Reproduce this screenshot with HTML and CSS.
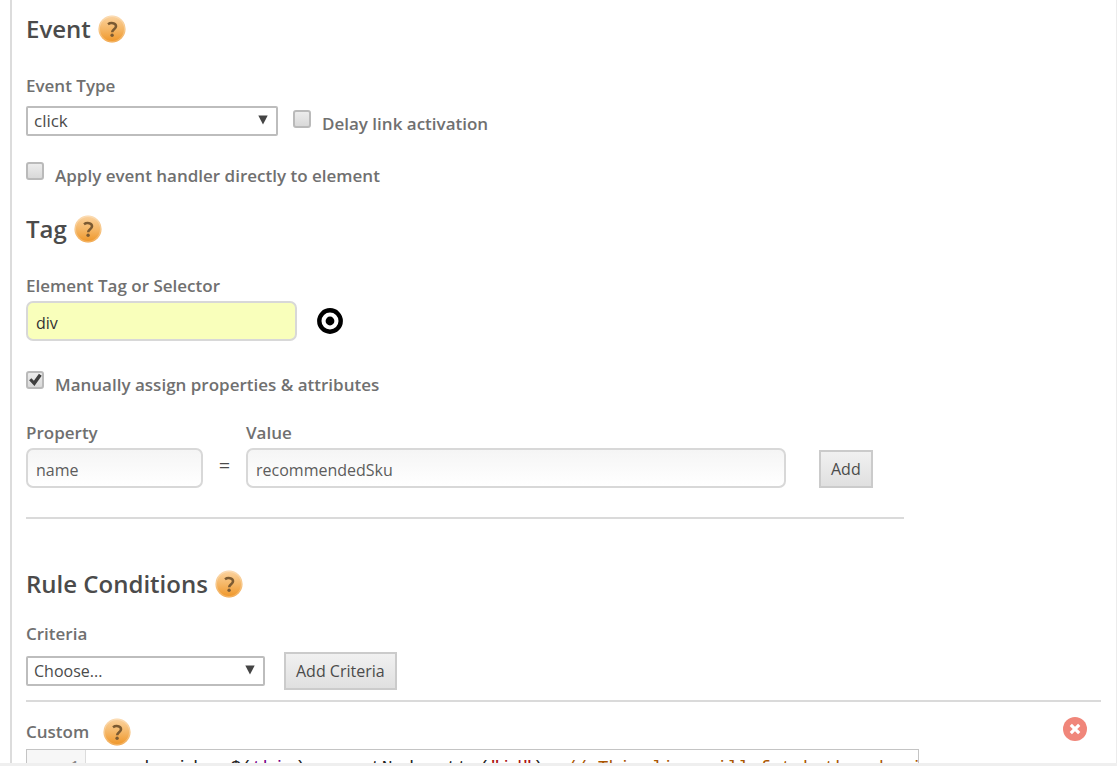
FILE: index.html
```html
<!DOCTYPE html>
<html lang="en">
<head>
<meta charset="utf-8">
<title>Event rule</title>
<link rel="stylesheet" href="styles.css">
</head>
<body>
<svg class="defs" aria-hidden="true">
  <defs>
    <linearGradient id="amber" x1="0" y1="0" x2="0" y2="1">
      <stop offset="0" stop-color="#fbd3a0"/>
      <stop offset="0.5" stop-color="#f5b767"/>
      <stop offset="1" stop-color="#ef9526"/>
    </linearGradient>
    <symbol id="help" viewBox="0 0 28 28">
      <circle cx="14" cy="14" r="13.5" fill="url(#amber)"/>
      <circle cx="14" cy="14" r="12.6" fill="none" stroke="#fff" stroke-opacity="0.25" stroke-width="1.2"/>
      <path d="M10 9.2c2.6-1.8 8-1.6 8 2 0 3-3.8 3-3.8 6" fill="none" stroke="#7b5a32" stroke-width="2.6"/>
      <circle cx="14.1" cy="20.3" r="1.7" fill="#7b5a32"/>
    </symbol>
    <symbol id="arrow" viewBox="0 0 10 10">
      <path d="M0.3 0.5h9.4L5 9.5z" fill="#444"/>
    </symbol>
  </defs>
</svg>
<main class="panel">
  <section class="section">
    <h2 class="title">Event <button class="help" type="button" aria-label="Event help"><svg><use href="#help"/></svg></button></h2>
    <label class="label" for="event-type">Event Type</label>
    <div class="row">
      <span class="select select-event">
        <select id="event-type"><option>click</option></select>
        <svg class="arrow"><use href="#arrow"/></svg>
      </span>
      <label class="check"><input type="checkbox"><span>Delay link activation</span></label>
    </div>
    <label class="check check-line"><input type="checkbox"><span>Apply event handler directly to element</span></label>
  </section>

  <section class="section section-tag">
    <h2 class="title">Tag <button class="help" type="button" aria-label="Tag help"><svg><use href="#help"/></svg></button></h2>
    <label class="label" for="selector">Element Tag or Selector</label>
    <div class="selector-row">
      <input class="text text-filled" id="selector" type="text" value="div">
      <button class="target" type="button" aria-label="Pick element">
        <svg viewBox="0 0 26 26"><circle cx="13" cy="13" r="10.7" fill="none" stroke="#000" stroke-width="4.4"/><circle cx="13" cy="13" r="4.4"/></svg>
      </button>
    </div>
    <label class="check check-manual"><input type="checkbox" checked><span>Manually assign properties &amp; attributes</span></label>
    <div class="pair">
      <div class="property">
        <label class="label" for="property">Property</label>
        <input class="text" id="property" type="text" value="name">
      </div>
      <span class="equals">=</span>
      <div class="value">
        <label class="label" for="value">Value</label>
        <input class="text" id="value" type="text" value="recommendedSku">
      </div>
      <button class="button" type="button">Add</button>
    </div>
  </section>

  <section class="section section-rules">
    <h2 class="title">Rule Conditions <button class="help" type="button" aria-label="Rule conditions help"><svg><use href="#help"/></svg></button></h2>
    <label class="label" for="criteria">Criteria</label>
    <div class="criteria-row">
      <span class="select select-criteria">
        <select id="criteria"><option>Choose...</option></select>
        <svg class="arrow"><use href="#arrow"/></svg>
      </span>
      <button class="button" type="button">Add Criteria</button>
    </div>
  </section>

  <section class="custom">
    <div class="custom-head">
      <h3 class="label">Custom</h3>
      <button class="help" type="button" aria-label="Custom help"><svg><use href="#help"/></svg></button>
      <button class="remove" type="button" aria-label="Remove">
        <svg viewBox="0 0 24 24"><circle cx="12" cy="12" r="12" fill="#f0867a"/><path d="M7.8 7.8l8.4 8.4M16.2 7.8l-8.4 8.4" stroke="#fff" stroke-width="3.2"/></svg>
      </button>
    </div>
    <div class="editor">
      <div class="gutter">1</div>
      <pre class="code">var sku_id = $(<span class="keyword">this</span>).parentNode.attr(<span class="string">"id"</span>); <span class="comment">// This line will fetch the sku id</span></pre>
    </div>
  </section>
</main>
<div class="footer"></div>
</body>
</html>
```
FILE: styles.css
```css
* {
  box-sizing: border-box;
}

body {
  margin: 0;
  height: 100vh;
  display: flex;
  flex-direction: column;
  background: #fff;
  color: #4b4b4b;
  font: 17px/24px "Open Sans", "Noto Sans", sans-serif;
}

button,
input,
select {
  font: inherit;
  color: inherit;
  margin: 0;
}

.defs {
  position: absolute;
  width: 0;
  height: 0;
}

.panel {
  flex: 1;
  min-height: 0;
  overflow: hidden;
  margin-left: 10px;
  padding: 12px 15px 0 14px;
  border-left: 2px solid #dcdcdc;
  border-right: 1px solid #ececec;
}

.footer {
  height: 3px;
  background: #efefef;
}

.title {
  display: flex;
  align-items: center;
  gap: 7px;
  margin: 0 0 28px;
  font-size: 24px;
  font-weight: 600;
  line-height: 34px;
}

.help {
  display: block;
  width: 28px;
  height: 28px;
  padding: 0;
  border: 0;
  background: none;
}

.help svg,
.target svg,
.remove svg {
  display: block;
  width: 100%;
  height: 100%;
}

.label {
  display: block;
  margin: 0;
  color: #707070;
  font-size: 17px;
  font-weight: 600;
}

.row {
  display: flex;
  align-items: flex-start;
  gap: 15px;
  margin-top: 8px;
}

.row .check {
  padding-top: 4px;
}

.select {
  position: relative;
  display: block;
}

.select select {
  display: block;
  width: 100%;
  height: 30px;
  padding: 0 6px;
  border: 2px solid #bdbdbd;
  border-radius: 2px;
  background: #fff;
  appearance: none;
}

.select-event {
  width: 252px;
}

.select-criteria {
  width: 239px;
}

.select-criteria select {
  font-size: 16px;
}

.arrow {
  position: absolute;
  top: 9px;
  right: 10px;
  width: 10px;
  height: 10px;
  pointer-events: none;
}

.check {
  display: flex;
  align-items: flex-start;
  gap: 11px;
  color: #707070;
  font-weight: 600;
}

.check span {
  padding-top: 2px;
}

.check input {
  width: 18px;
  height: 18px;
  flex: none;
  border: 2px solid #bababa;
  border-radius: 3px;
  background: linear-gradient(#ececec, #d9d9d9);
  appearance: none;
}

.check input:checked::before {
  content: "";
  display: block;
  width: 14px;
  height: 14px;
  background: #3f3f3f;
  clip-path: polygon(8% 52%, 24% 38%, 42% 55%, 78% 6%, 98% 20%, 46% 92%);
}

.check-line {
  margin-top: 26px;
}

.section-tag {
  margin-top: 24px;
}

.selector-row {
  display: flex;
  align-items: center;
  gap: 20px;
  margin-top: 3px;
}

.text {
  display: block;
  width: 100%;
  height: 40px;
  padding: 3px 8px 0;
  border: 2px solid #d8d8d8;
  border-radius: 7px;
  background: linear-gradient(#f5f5f5, #fff);
  color: #5c5c5c;
  font-size: 16px;
}

.text-filled {
  width: 271px;
  background: #f9ffbb;
  color: #333;
}

.target {
  width: 26px;
  height: 26px;
  padding: 0;
  border: 0;
  background: none;
}

.check-manual {
  margin-top: 30px;
}

.pair {
  display: flex;
  align-items: flex-end;
  max-width: 878px;
  margin-top: 24px;
  padding-bottom: 29px;
  border-bottom: 2px solid #dadada;
}

.pair .label {
  margin-bottom: 3px;
}

.property {
  width: 177px;
}

.equals {
  width: 43px;
  height: 34px;
  font-size: 20px;
  text-align: center;
}

.value {
  flex: 1;
  max-width: 540px;
  margin-right: 33px;
}

.button {
  height: 38px;
  padding: 0 10px;
  border: 2px solid #cbcbcb;
  background: linear-gradient(#f1f1f1, #e0e0e0);
  font-size: 16px;
  white-space: nowrap;
}

.section-rules {
  margin-top: 48px;
}

.section-rules .title {
  margin-bottom: 21px;
}

.criteria-row {
  display: flex;
  align-items: center;
  gap: 19px;
  margin-top: 6px;
  padding-bottom: 10px;
  border-bottom: 2px solid #dadada;
}

.custom-head {
  display: flex;
  align-items: center;
  gap: 14px;
  height: 47px;
  padding-top: 12px;
}

.remove {
  width: 24px;
  height: 24px;
  margin: 0 14px 5px auto;
  padding: 0;
  border: 0;
  background: none;
}

.editor {
  display: flex;
  max-width: 893px;
  overflow: hidden;
  border: 1px solid #c4c4c4;
  font: 18px/24px "Liberation Mono", monospace;
}

.gutter {
  flex: none;
  width: 59px;
  padding: 6px 5px 0;
  border-right: 1px solid #dcdcdc;
  background: #f7f7f7;
  color: #888;
  text-align: right;
}

.code {
  margin: 0;
  padding: 6px 4px;
  color: #222;
  font: inherit;
}

.keyword {
  color: #708;
}

.string {
  color: #a11;
}

.comment {
  color: #a50;
}
```
